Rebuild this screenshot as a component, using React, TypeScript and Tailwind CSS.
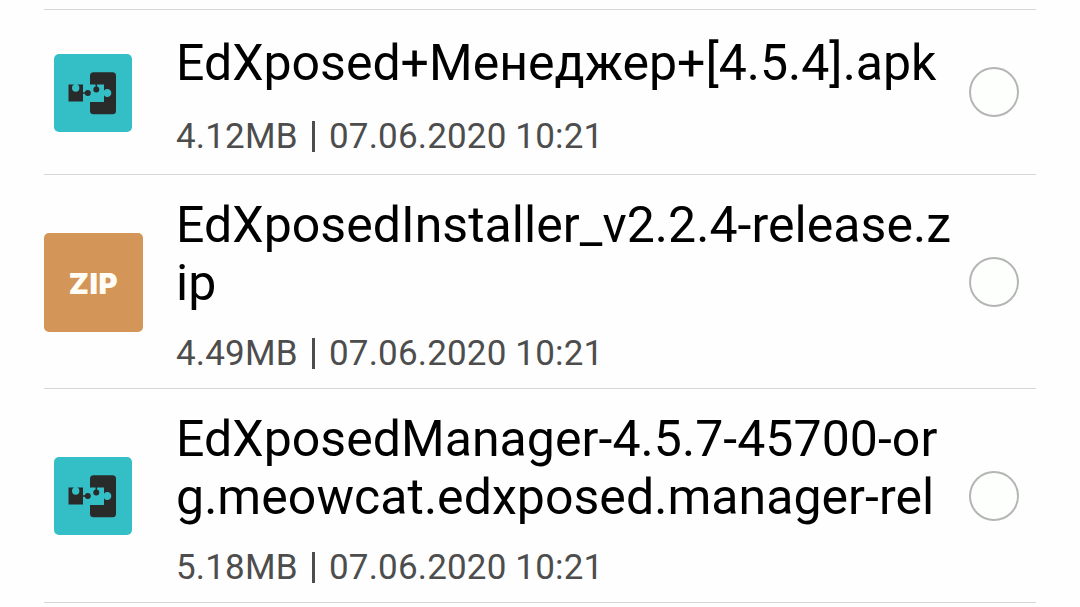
type FileEntry = {
  name: string[]
  size: string
  date: string
  kind: 'apk' | 'zip'
}

const files: FileEntry[] = [
  { name: ['EdXposed+Менеджер+[4.5.4].apk'], size: '4.12MB', date: '07.06.2020 10:21', kind: 'apk' },
  { name: ['EdXposedInstaller_v2.2.4-release.z', 'ip'], size: '4.49MB', date: '07.06.2020 10:21', kind: 'zip' },
  {
    name: ['EdXposedManager-4.5.7-45700-or', 'g.meowcat.edxposed.manager-rel'],
    size: '5.18MB',
    date: '07.06.2020 10:21',
    kind: 'apk',
  },
]

function ApkIcon() {
  return (
    <svg viewBox="0 0 78 78" className="mr-px size-[78px]">
      <rect width="78" height="78" rx="5" fill="#34bec6" />
      <rect x="36" y="18.3" width="26" height="42" rx="3.5" fill="#292a2a" />
      <path d="M35 30.5H50V36.8A4 4 0 1 1 50 41.2V48H35Z" fill="#34bec6" />
      <path d="M14.5 30.5H29V47.5H14.5Z" fill="#292a2a" />
      <circle cx="21.7" cy="34" r="3.7" fill="#34bec6" />
      <path d="M20 30H23.4V33H20Z" fill="#34bec6" />
      <path d="M28 39H33M42.3 30V35" stroke="#292a2a" strokeWidth="1.5" />
      <circle cx="33.8" cy="39" r="3" fill="#292a2a" />
      <circle cx="42.3" cy="35.5" r="3" fill="#292a2a" />
    </svg>
  )
}

function ZipIcon() {
  return (
    <div className="flex size-[99px] items-center justify-center rounded-[5px] bg-[#d39658]">
      <span className="pt-0.5 font-[Inter,sans-serif] text-[29px] leading-none font-black tracking-[0.6px] text-[#fffdf5]">ZIP</span>
    </div>
  )
}

function FileRow({ file }: { file: FileEntry }) {
  const single = file.name.length === 1
  return (
    <li
      className={`flex items-center border-b border-[#d6d6d6] ${single ? 'h-[165px]' : 'h-[214px]'}`}
    >
      <div className={`flex w-[99px] shrink-0 justify-center ${file.kind === 'zip' ? 'pt-0.5' : 'pt-px'}`}>
        {file.kind === 'apk' ? <ApkIcon /> : <ZipIcon />}
      </div>
      <div className={`ml-[33px] min-w-0 flex-1 self-start ${single ? 'pt-6' : 'pt-[21px]'}`}>
        <h3
          className={`text-[50px] leading-[58px] whitespace-nowrap text-black ${single ? '' : 'tracking-[0.05px]'}`}
        >
          {file.name.map((line) => (
            <span key={line} className="block">{line}</span>
          ))}
        </h3>
        <p
          className={`flex items-center text-[35px] leading-[42px] tracking-[0.17px] whitespace-nowrap text-[#4d4d4d] ${single ? 'mt-6' : 'mt-[21px]'}`}
        >
          <span className="w-[120px]">{file.size}</span>
          <span className="mr-3.5 ml-4 mb-0.5 h-[31px] w-[3px] shrink-0 bg-[#4d4d4d]" />
          <span>{file.date}</span>
        </p>
      </div>
      <button
        type="button"
        aria-label={file.name.join('')}
        className="mr-[17px] size-[50px] shrink-0 rounded-full border-2 border-[#b5b5b5] bg-[#fdfffc]"
      />
    </li>
  )
}

export default function App() {
  return (
    <main className="h-[607px] w-[1080px] overflow-hidden bg-[#fefefe] px-11 pt-[9px] font-[Roboto,sans-serif]">
      <ul className="border-t border-[#d6d6d6]">
        {files.map((file) => (
          <FileRow key={file.name[0]} file={file} />
        ))}
      </ul>
    </main>
  )
}
